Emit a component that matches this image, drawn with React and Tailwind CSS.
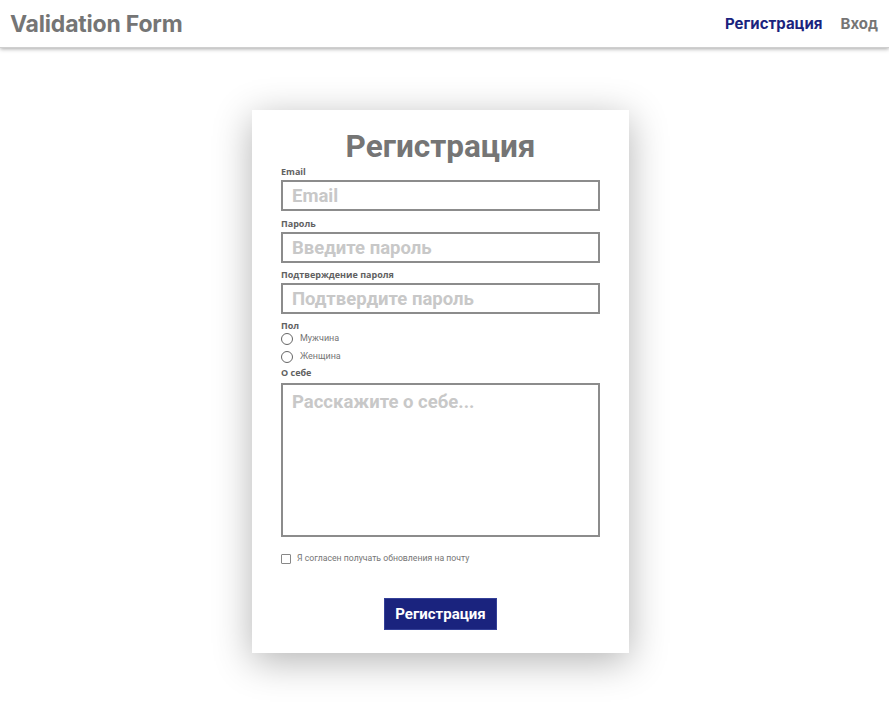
import React from 'react';

export default function App() {
  return (
    <div className="min-h-screen bg-white font-['Roboto',sans-serif]">
      {/* Header */}
      <header className="h-12 flex items-center justify-between pl-[10px] pr-[11px] pt-[2px] bg-white shadow-[0_1px_4px_rgba(0,0,0,0.35)] border-b border-[#cfcfcf]">
        <h1 className="font-['Inter',sans-serif] font-bold text-[23px] text-[#757575] tracking-[-0.2px]">
          Validation Form
        </h1>
        <nav className="flex items-center gap-[18px] font-['Inter',sans-serif] font-bold text-[15px]">
          <a className="text-[#1a237e]">Регистрация</a>
          <a className="text-[#757575]">Вход</a>
        </nav>
      </header>

      {/* Card */}
      <div className="flex justify-center pt-[62px] pr-[8px]">
        <div className="w-[377px] h-[543px] bg-white px-[29px] pt-[17px] shadow-[0_8px_36px_rgba(0,0,0,0.3)] flex flex-col">
          <h2 className="text-center font-bold text-[31.5px] leading-[39px] text-[#757575]">
            Регистрация
          </h2>

          <label className="block h-[12px] mb-[2px] text-[9px] leading-[12px] font-bold text-[#616161] font-['Open_Sans',sans-serif]">
            Email
          </label>
          <input
            placeholder="Email"
            className="h-[31px] w-full border-2 border-[#8c8c8c] pl-[9px] text-[18.5px] font-bold outline-none placeholder:font-bold placeholder:text-[#c8c8c8]"
          />

          <label className="block mt-[7px] h-[12px] mb-[2px] text-[9px] leading-[12px] font-bold text-[#616161] font-['Open_Sans',sans-serif]">
            Пароль
          </label>
          <input
            type="password"
            placeholder="Введите пароль"
            className="h-[31px] w-full border-2 border-[#8c8c8c] pl-[9px] text-[18.5px] font-bold outline-none placeholder:font-bold placeholder:text-[#c8c8c8]"
          />

          <label className="block mt-[6px] h-[12px] mb-[2px] text-[9px] leading-[12px] font-bold text-[#616161] font-['Open_Sans',sans-serif]">
            Подтверждение пароля
          </label>
          <input
            type="password"
            placeholder="Подтвердите пароль"
            className="h-[31px] w-full border-2 border-[#8c8c8c] pl-[9px] text-[18.5px] font-bold outline-none placeholder:font-bold placeholder:text-[#c8c8c8]"
          />

          <label className="block mt-[6px] h-[12px] text-[9px] leading-[12px] font-bold text-[#616161] font-['Open_Sans',sans-serif]">
            Пол
          </label>
          <div className="flex items-center h-[14px]">
            <span className="w-[12px] h-[12px] rounded-full border-[1.5px] border-[#666]" />
            <span className="ml-[7px] text-[9px] text-[#757575]">Мужчина</span>
          </div>
          <div className="flex items-center h-[14px] mt-[4px]">
            <span className="w-[12px] h-[12px] rounded-full border-[1.5px] border-[#666]" />
            <span className="ml-[7px] text-[9px] text-[#757575]">Женщина</span>
          </div>

          <label className="block mt-[3px] h-[12px] mb-[4px] text-[9px] leading-[12px] font-bold text-[#616161] font-['Open_Sans',sans-serif]">
            О себе
          </label>
          <textarea
            placeholder="Расскажите о себе..."
            className="h-[154px] w-full border-2 border-[#8c8c8c] pl-[9px] pt-[4px] text-[18.5px] font-bold outline-none resize-none placeholder:font-bold placeholder:text-[#c8c8c8]"
          />

          <div className="flex items-center mt-[15px]">
            <span className="w-[10px] h-[10px] border-[1.5px] border-[#888] rounded-[1px]" />
            <span className="ml-[6px] text-[8.7px] text-[#757575]">Я согласен получать обновления на почту</span>
          </div>

          <div className="flex justify-center mt-[33px]">
            <button className="w-[113px] h-[32px] bg-[#1a237e] text-white font-bold text-[15px] border border-[#5c6bc0]/40">
              Регистрация
            </button>
          </div>
        </div>
      </div>
    </div>
  );
}
